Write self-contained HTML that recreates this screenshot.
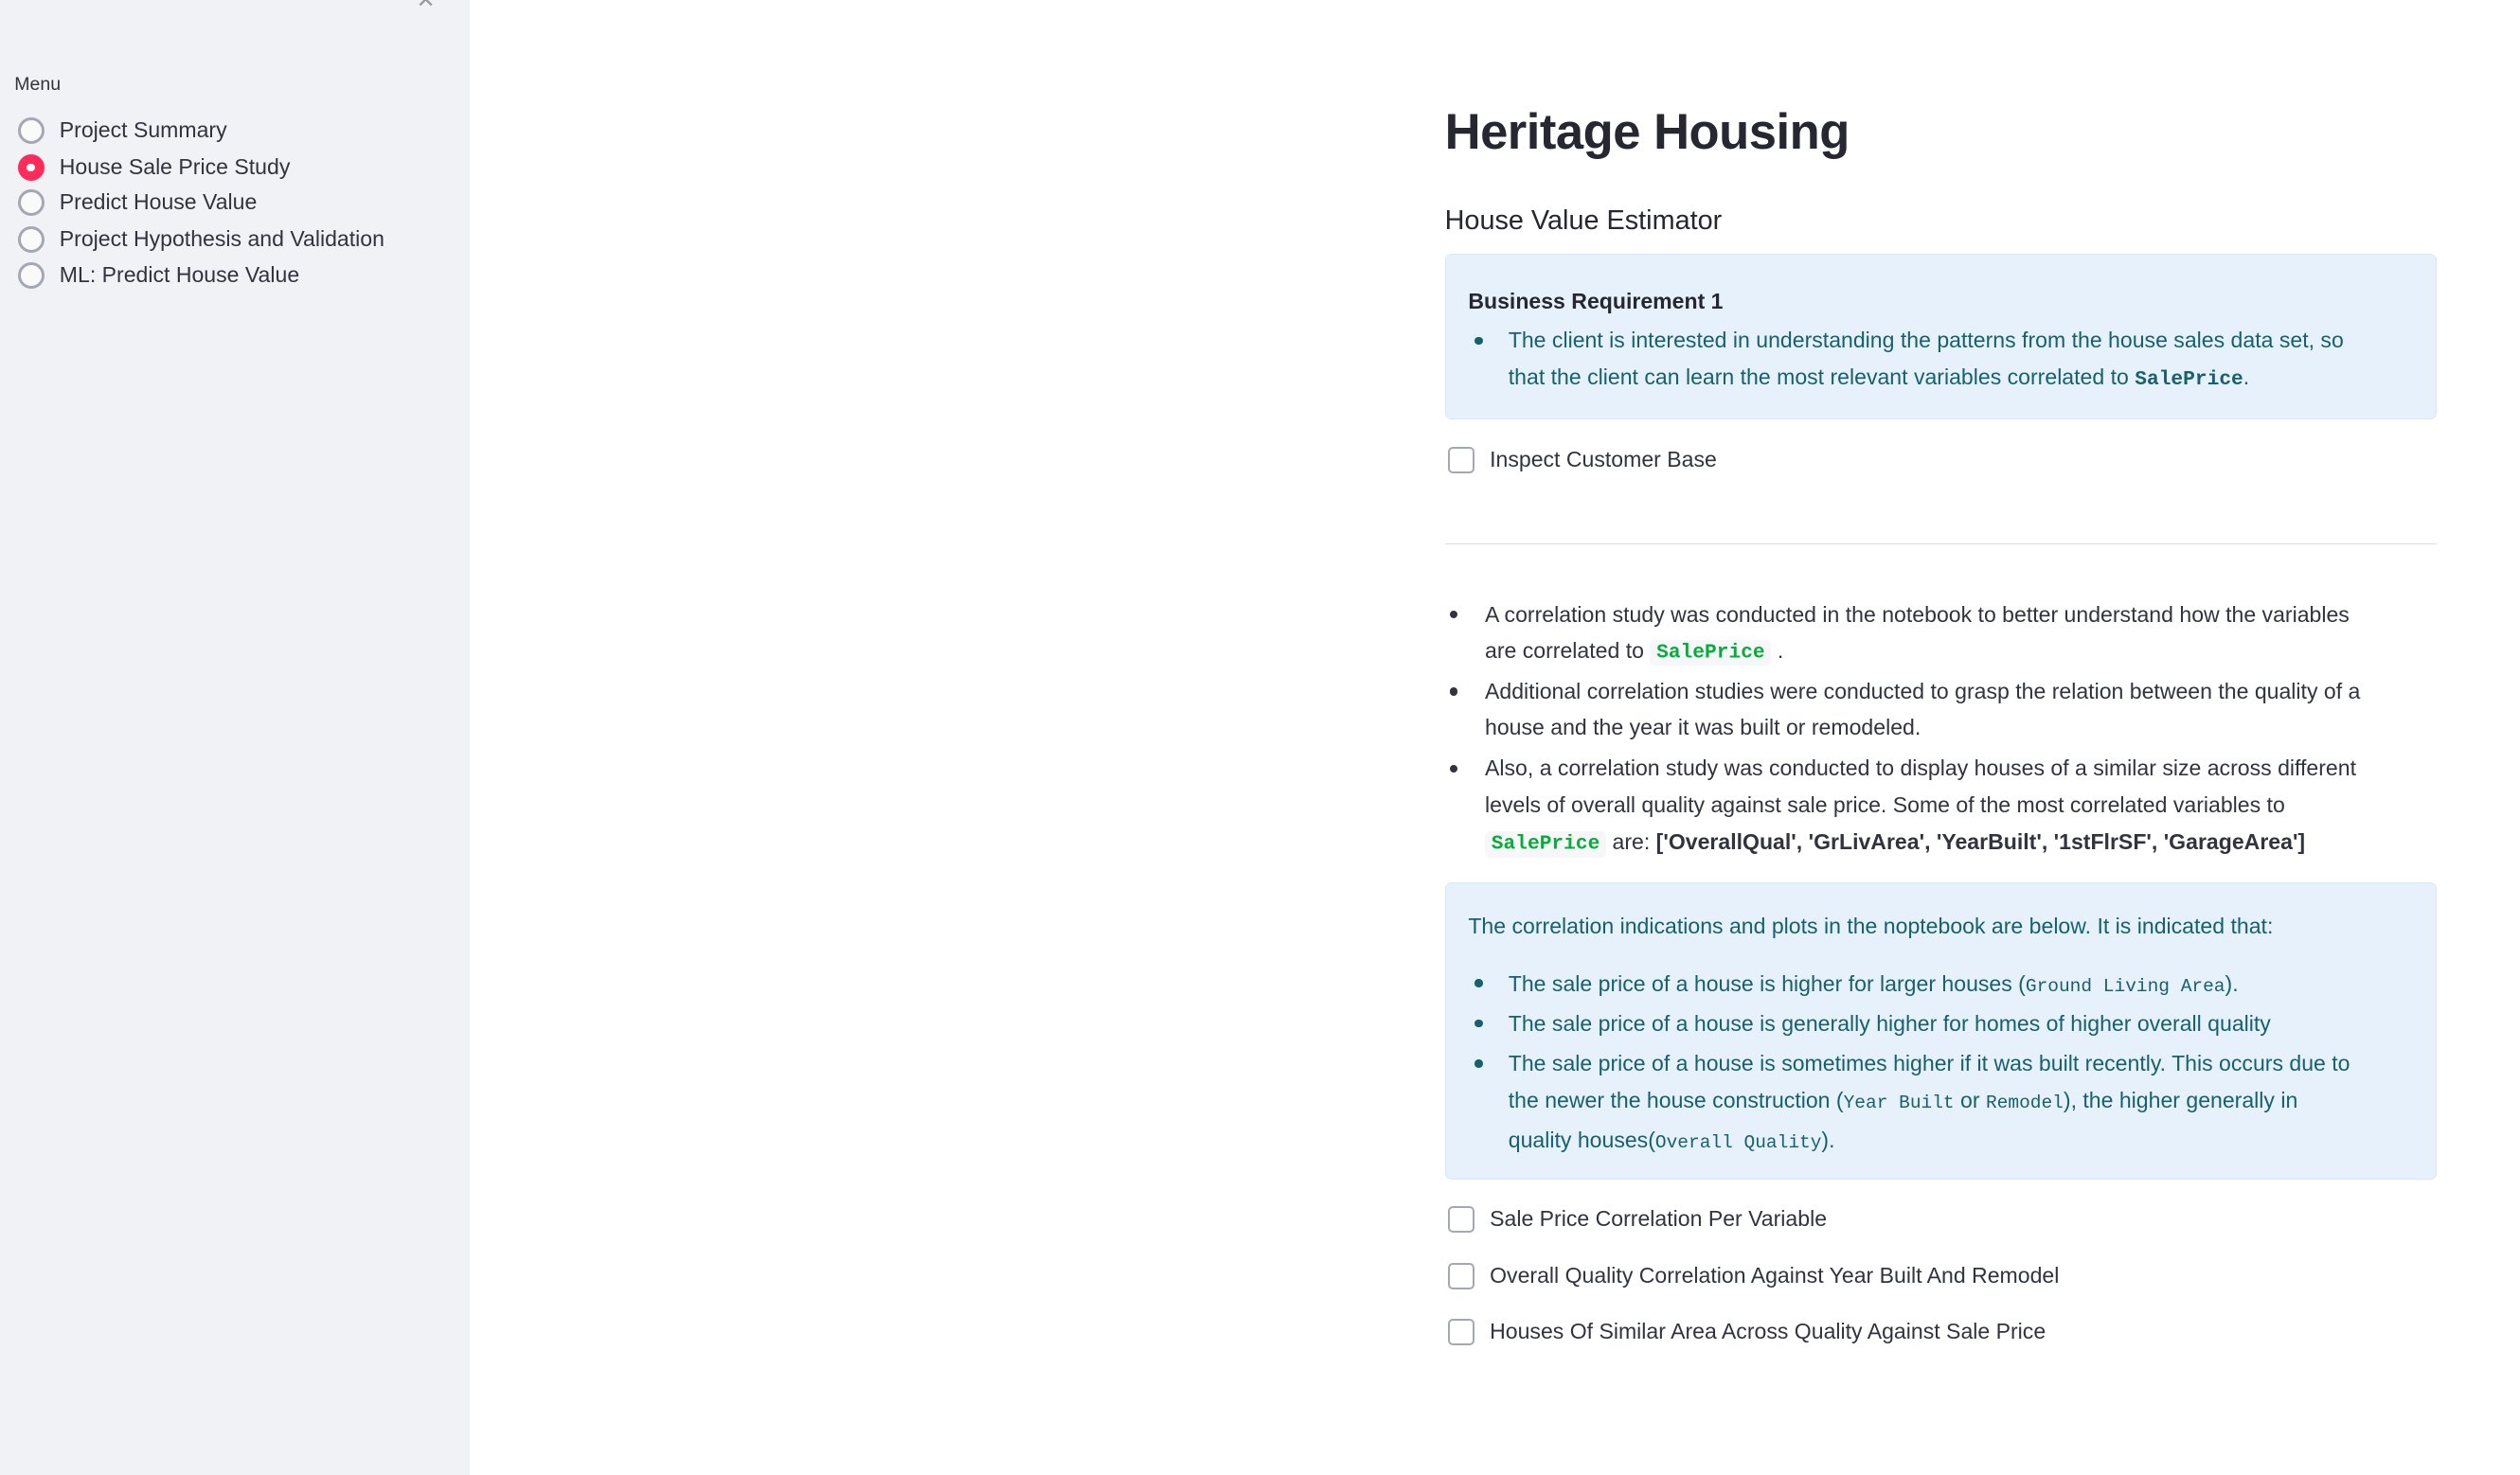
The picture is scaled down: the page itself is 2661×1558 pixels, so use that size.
<!DOCTYPE html>
<html><head><meta charset="utf-8"><style>
html{zoom:1.697}
body{margin:0;width:1568px;height:918px;overflow:hidden;background:#fff;font-family:"Liberation Sans",sans-serif;color:#31333f;position:relative}
.sb{position:absolute;left:0;top:0;width:292px;height:918px;background:#f0f2f6}
.a{position:absolute;white-space:nowrap}
.rad{position:absolute;left:11px;width:13px;height:13px;border:2px solid #a3a8b4;border-radius:50%;background:#fafafa}
.rad.on{background:#ff2b5b;border-color:#ff2b5b}
.rad.on:after{content:"";position:absolute;left:4px;top:4px;width:5px;height:5px;background:#fff;border-radius:50%}
.rt{position:absolute;left:37px;font-size:13.6px;line-height:16px}
.info{position:absolute;left:899px;width:617px;background:#e7f1fb;border:1px solid #d8e8f8;border-radius:4px;box-sizing:border-box;color:#16606f;font-size:13.6px}
.t{font-size:13.6px;line-height:16px}
.dot{position:absolute;width:5px;height:5px;border-radius:50%}
.cb{position:absolute;left:901px;width:14px;height:14px;border:1.5px solid #a3a8b4;border-radius:3px}
.code{font-family:"Liberation Mono",monospace;font-weight:bold;color:#09ab3b;background:#f6f7f9;padding:1px 4px;border-radius:3px;font-size:12.5px}
.m{font-family:"Liberation Mono",monospace;font-size:11.5px}
</style></head><body>
<div class="sb">
<div class="a" style="left:259px;top:-8px;color:#999;font-size:14px">✕</div>
<div class="a" style="left:9px;top:46px;font-size:11.5px">Menu</div>
<div class="rad" style="top:73px"></div><div class="rt" style="top:73px">Project Summary</div>
<div class="rad on" style="top:96px"></div><div class="rt" style="top:96px">House Sale Price Study</div>
<div class="rad" style="top:118px"></div><div class="rt" style="top:118px">Predict House Value</div>
<div class="rad" style="top:141px"></div><div class="rt" style="top:141px">Project Hypothesis and Validation</div>
<div class="rad" style="top:163px"></div><div class="rt" style="top:163px">ML: Predict House Value</div>
</div>

<div class="a" style="left:899px;top:64px;font-size:31px;font-weight:bold;letter-spacing:-0.3px;color:#262730">Heritage Housing</div>
<div class="a" style="left:899px;top:128px;font-size:17px;color:#262730">House Value Estimator</div>

<div class="info" style="top:158px;height:103px">
<div class="a t" style="left:14px;top:21px;font-weight:bold;color:#262730">Business Requirement 1</div>
<div class="dot" style="left:18px;top:51px;background:#16606f"></div>
<div class="a t" style="left:39px;top:42px;line-height:23px">The client is interested in understanding the patterns from the house sales data set, so<br>that the client can learn the most relevant variables correlated to <b class="m" style="font-size:12.5px">SalePrice</b>.</div>
</div>

<div class="cb" style="top:278px"></div><div class="a t" style="left:927px;top:278px">Inspect Customer Base</div>
<div class="a" style="left:899px;top:338px;width:617px;height:1px;background:#dcdde1"></div>

<div class="dot" style="left:902px;top:380px;background:#31333f"></div>
<div class="a t" style="left:924px;top:371px;line-height:22.5px">A correlation study was conducted in the notebook to better understand how the variables<br>are correlated to <span class="code">SalePrice</span> .</div>
<div class="dot" style="left:902px;top:428px;background:#31333f"></div>
<div class="a t" style="left:924px;top:419px;line-height:22.5px">Additional correlation studies were conducted to grasp the relation between the quality of a<br>house and the year it was built or remodeled.</div>
<div class="dot" style="left:902px;top:476px;background:#31333f"></div>
<div class="a t" style="left:924px;top:467px;line-height:22.8px">Also, a correlation study was conducted to display houses of a similar size across different<br>levels of overall quality against sale price. Some of the most correlated variables to<br><span class="code">SalePrice</span> are: <b>['OverallQual', 'GrLivArea', 'YearBuilt', '1stFlrSF', 'GarageArea']</b></div>

<div class="info" style="top:549px;height:185px">
<div class="a t" style="left:14px;top:19px">The correlation indications and plots in the noptebook are below. It is indicated that:</div>
<div class="dot" style="left:18px;top:60px;background:#16606f"></div>
<div class="a t" style="left:39px;top:55px">The sale price of a house is higher for larger houses (<span class="m">Ground Living Area</span>).</div>
<div class="dot" style="left:18px;top:85px;background:#16606f"></div>
<div class="a t" style="left:39px;top:80px">The sale price of a house is generally higher for homes of higher overall quality</div>
<div class="dot" style="left:18px;top:110px;background:#16606f"></div>
<div class="a t" style="left:39px;top:101px;line-height:23px">The sale price of a house is sometimes higher if it was built recently. This occurs due to<br>the newer the house construction (<span class="m">Year Built</span> or <span class="m">Remodel</span>), the higher generally in<br>quality houses(<span class="m">Overall Quality</span>).</div>
</div>

<div class="cb" style="top:751px"></div><div class="a t" style="left:927px;top:751px">Sale Price Correlation Per Variable</div>
<div class="cb" style="top:786px"></div><div class="a t" style="left:927px;top:786px">Overall Quality Correlation Against Year Built And Remodel</div>
<div class="cb" style="top:821px"></div><div class="a t" style="left:927px;top:821px">Houses Of Similar Area Across Quality Against Sale Price</div>
</body></html>
